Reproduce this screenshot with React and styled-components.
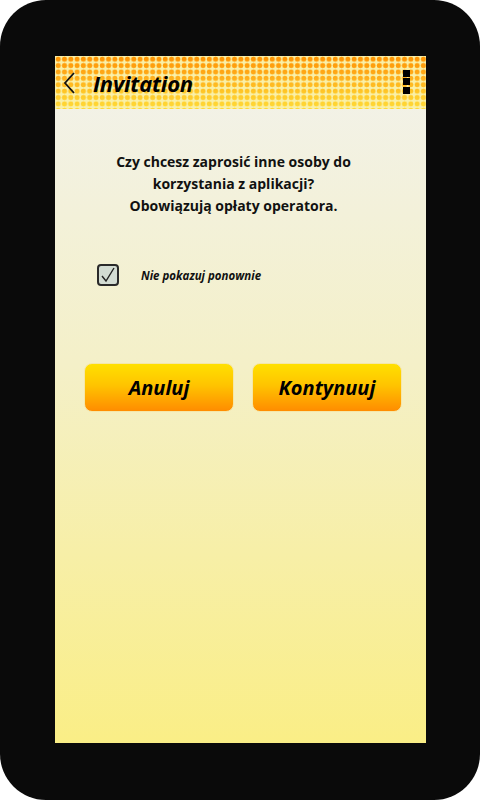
import React from "react";
import styled, { createGlobalStyle } from "styled-components";

const Global = createGlobalStyle`
  html, body { margin: 0; padding: 0; background: #ffffff; }
  body { font-family: "Open Sans", "Noto Sans", sans-serif; }
`;

const Frame = styled.div`
  width: 480px;
  height: 800px;
  box-sizing: border-box;
  background: #0a0a0a;
  border-radius: 46px;
  padding: 56px 54px 57px 55px;
  display: flex;
`;

const Screen = styled.div`
  flex: 1;
  display: flex;
  flex-direction: column;
  background: linear-gradient(180deg, #f2f2ec 0%, #f4f0c8 45%, #faee86 100%);
  overflow: hidden;
`;

const Header = styled.header`
  height: 53px;
  flex: none;
  display: flex;
  align-items: center;
  padding: 0 16px 0 8px;
  background:
    radial-gradient(circle at 3.2px 3.2px, transparent 2.3px, #f9f0a8 2.9px) 0 0 / 6.3px 6.4px,
    linear-gradient(180deg, #ff9300 0%, #ffaa18 35%, #ffc828 70%, #ffda38 100%);
  gap: 16px;
`;

const Back = styled.svg`
  width: 14px;
  height: 24px;
  flex: none;
`;

const Title = styled.h1`
  margin: 0;
  flex: 1;
  font-family: "Open Sans", sans-serif;
  font-style: italic;
  font-weight: 700;
  font-size: 22px;
  color: #000;
  letter-spacing: -0.2px;
`;

const Kebab = styled.div`
  display: flex;
  flex-direction: column;
  gap: 1.5px;
  margin-top: -2px;
`;

const Square = styled.span`
  width: 7px;
  height: 7px;
  background: #000;
`;

const Body = styled.main`
  flex: 1;
  display: flex;
  flex-direction: column;
  padding: 42px 0 0;
`;

const Message = styled.p`
  margin: 0 0 0 -14px;
  text-align: center;
  font-family: "Open Sans", sans-serif;
  font-weight: 700;
  font-size: 14px;
  line-height: 22px;
  color: #111;
`;

const CheckRow = styled.label`
  display: flex;
  align-items: center;
  gap: 22px;
  margin: 47px 0 0 42px;
`;

const Box = styled.span`
  width: 22px;
  height: 22px;
  box-sizing: border-box;
  border: 2px solid #2a2a2a;
  border-radius: 4px;
  background: #d3dcd3;
  display: flex;
  align-items: center;
  justify-content: center;
`;

const CheckLabel = styled.span`
  font-family: "Open Sans", sans-serif;
  font-style: italic;
  font-weight: 700;
  font-size: 11.5px;
  color: #111;
`;

const Buttons = styled.div`
  display: flex;
  gap: 18px;
  margin: 77px 0 0 29px;
`;

const Button = styled.button`
  width: 150px;
  height: 49px;
  border: 1px solid #f5e7a8;
  border-radius: 8px;
  background: linear-gradient(180deg, #ffe000 0%, #ffc400 45%, #ff8c00 100%);
  font-family: "Open Sans", sans-serif;
  font-style: italic;
  font-weight: 700;
  font-size: 20px;
  color: #000;
  padding: 0;
  cursor: pointer;
`;

export default function App() {
  return (
    <>
      <Global />
      <Frame>
        <Screen>
          <Header>
            <Back viewBox="0 0 14 24">
              <path d="M11 2 L2 12 L11 22" fill="none" stroke="#111" strokeWidth="1.8" />
            </Back>
            <Title>Invitation</Title>
            <Kebab>
              <Square />
              <Square />
              <Square />
            </Kebab>
          </Header>
          <Body>
            <Message>
              Czy chcesz zaprosić inne osoby do
              <br />
              korzystania z aplikacji?
              <br />
              Obowiązują opłaty operatora.
            </Message>
            <CheckRow>
              <Box>
                <svg width="16" height="16" viewBox="0 0 16 16">
                  <path d="M2 9 L6 14 L14 1" fill="none" stroke="#222" strokeWidth="1.4" />
                </svg>
              </Box>
              <CheckLabel>Nie pokazuj ponownie</CheckLabel>
            </CheckRow>
            <Buttons>
              <Button>Anuluj</Button>
              <Button>Kontynuuj</Button>
            </Buttons>
          </Body>
        </Screen>
      </Frame>
    </>
  );
}
